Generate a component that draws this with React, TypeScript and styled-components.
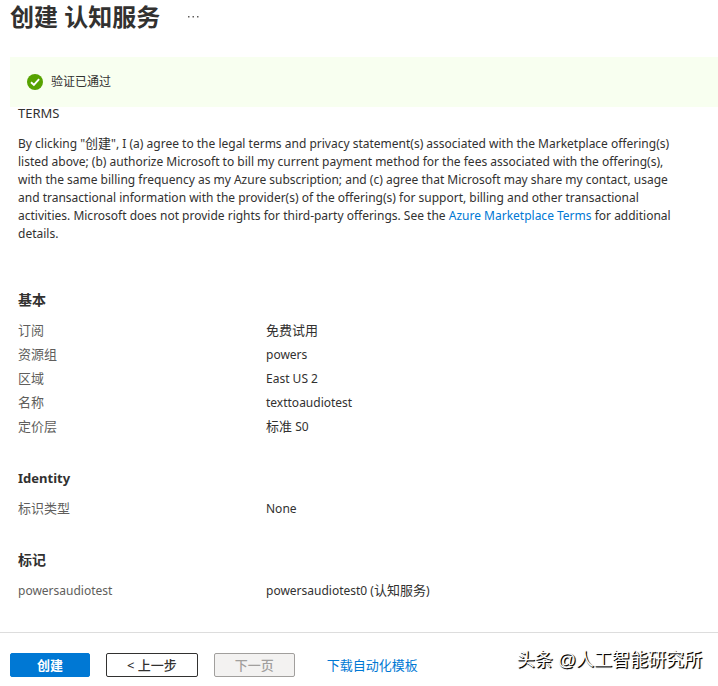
import React from "react";
import styled, { createGlobalStyle } from "styled-components";

const GlobalStyle = createGlobalStyle`
  *, *::before, *::after { box-sizing: border-box; }
  body {
    margin: 0;
    background: #ffffff;
    color: #323130;
    font-family: "Noto Sans", "Noto Sans CJK SC", sans-serif;
    font-size: 12px;
    line-height: 18px;
  }
`;

const Page = styled.div`
  display: flex;
  flex-direction: column;
  min-height: 100vh;
`;

const Header = styled.header`
  display: flex;
  align-items: center;
  gap: 25px;
  height: 34px;
  padding: 0 10px;
`;

const Title = styled.h1`
  margin: 0;
  font-size: 24px;
  line-height: 32px;
  font-weight: 700;
`;

const MoreButton = styled.button`
  display: flex;
  padding: 2px;
  border: 0;
  background: transparent;
  color: #605e5c;
  cursor: pointer;
`;

const Banner = styled.div`
  display: flex;
  align-items: center;
  gap: 8px;
  min-height: 50px;
  margin: 23px 0 0 10px;
  padding: 0 17px;
  background: #f8fff0;
`;

const Content = styled.main`
  flex: 1;
  padding: 0 18px 24px;
`;

const TermsTitle = styled.h2`
  margin: 0 0 16px;
  font-size: 13px;
  line-height: 12px;
  font-weight: 400;
`;

const Terms = styled.p`
  max-width: 664px;
  margin: 0 0 47px;
`;

const Chinese = styled.span`
  font-size: 13px;
  line-height: 1;
`;

const Link = styled.a`
  color: #0078d4;
  text-decoration: none;
  &:hover { text-decoration: underline; }
`;

const Section = styled.section`
  & + & { margin-top: 29px; }
`;

const SectionTitle = styled.h3`
  margin: 0 0 9px;
  font-size: 13px;
  line-height: 20px;
  font-weight: 700;

  &:lang(zh) { font-size: 14px; }
`;

const Details = styled.dl`
  margin: 0;
`;

const DetailRow = styled.div`
  display: grid;
  grid-template-columns: 248px 1fr;
  line-height: 24px;
`;

const DetailLabel = styled.dt`
  color: #605e5c;
`;

const DetailValue = styled.dd`
  margin: 0;
`;

const Footer = styled.footer`
  position: relative;
  display: flex;
  align-items: center;
  gap: 16px;
  padding: 20px 16px 9px 10px;
  border-top: 1px solid #dddddd;
`;

const Button = styled.button<{ $primary?: boolean }>`
  min-width: 80px;
  height: 24px;
  padding: 0 20px;
  border: 1px solid ${(p) => (p.$primary ? "#0078d4" : "#323130")};
  border-radius: 2px;
  background: ${(p) => (p.$primary ? "#0078d4" : "#ffffff")};
  color: ${(p) => (p.$primary ? "#ffffff" : "#323130")};
  font-family: inherit;
  font-size: 13px;
  line-height: 20px;
  font-weight: ${(p) => (p.$primary ? 700 : 500)};
  white-space: nowrap;
  cursor: pointer;

  &:disabled {
    border-color: #a19f9d;
    background: #f3f2f1;
    color: #a19f9d;
    cursor: default;
  }
`;

const TemplateLink = styled(Link)`
  margin-left: 16px;
  font-size: 13px;
`;

const Credit = styled.span`
  position: absolute;
  right: 16px;
  bottom: 14px;
  color: #ffffff;
  font-family: "Liberation Sans", "Noto Sans CJK SC", sans-serif;
  font-size: 18px;
  line-height: 24px;
  text-shadow: 1px 1px 1px #000000, 1px 1px 0 #222222;
  white-space: nowrap;
`;

type Row = [label: React.ReactNode, value: React.ReactNode];

const sections: { title: string; lang: string; rows: Row[] }[] = [
  {
    title: "基本",
    lang: "zh",
    rows: [
      [<Chinese>订阅</Chinese>, <Chinese>免费试用</Chinese>],
      [<Chinese>资源组</Chinese>, "powers"],
      [<Chinese>区域</Chinese>, "East US 2"],
      [<Chinese>名称</Chinese>, "texttoaudiotest"],
      [<Chinese>定价层</Chinese>, <><Chinese>标准</Chinese> S0</>],
    ],
  },
  { title: "Identity", lang: "en", rows: [[<Chinese>标识类型</Chinese>, "None"]] },
  {
    title: "标记",
    lang: "zh",
    rows: [["powersaudiotest", <>powersaudiotest0 (<Chinese>认知服务</Chinese>)</>]],
  },
];

function MoreIcon() {
  return (
    <svg width="13" height="4" viewBox="0 0 13 4" fill="currentColor" aria-hidden="true">
      <rect x="1" y="1" width="1.5" height="1.5" />
      <rect x="5.5" y="1" width="1.5" height="1.5" />
      <rect x="10" y="1" width="1.5" height="1.5" />
    </svg>
  );
}

function PassedIcon() {
  return (
    <svg width="16" height="16" viewBox="0 0 16 16" aria-hidden="true">
      <circle cx="8" cy="8" r="8" fill="#57a300" />
      <path d="M4 8.2 6.9 11 12.1 5.2" fill="none" stroke="#ffffff" strokeWidth="1.9" />
    </svg>
  );
}

export default function App() {
  return (
    <>
      <GlobalStyle />
      <Page>
        <Header>
          <Title>创建 认知服务</Title>
          <MoreButton type="button" aria-label="更多">
            <MoreIcon />
          </MoreButton>
        </Header>
        <Banner role="status">
          <PassedIcon />
          <span>验证已通过</span>
        </Banner>
        <Content>
          <TermsTitle>TERMS</TermsTitle>
          <Terms>
            By clicking "<Chinese>创建</Chinese>", I (a) agree to the legal terms and privacy
            statement(s) associated with the Marketplace offering(s) listed above; (b) authorize
            Microsoft to bill my current payment method for the fees associated with the
            offering(s), with the same billing frequency as my Azure subscription; and (c) agree
            that Microsoft may share my contact, usage and transactional information with the
            provider(s) of the offering(s) for support, billing and other transactional
            activities. Microsoft does not provide rights for third-party offerings. See the{" "}
            <Link href="#terms">Azure Marketplace Terms</Link> for additional details.
          </Terms>
          {sections.map((section) => (
            <Section key={section.title}>
              <SectionTitle lang={section.lang}>{section.title}</SectionTitle>
              <Details>
                {section.rows.map(([label, value], index) => (
                  <DetailRow key={index}>
                    <DetailLabel>{label}</DetailLabel>
                    <DetailValue>{value}</DetailValue>
                  </DetailRow>
                ))}
              </Details>
            </Section>
          ))}
        </Content>
        <Footer>
          <Button type="button" $primary>创建</Button>
          <Button type="button">&lt; 上一步</Button>
          <Button type="button" disabled>下一页</Button>
          <TemplateLink href="#template">下载自动化模板</TemplateLink>
          <Credit>头条 @人工智能研究所</Credit>
        </Footer>
      </Page>
    </>
  );
}
